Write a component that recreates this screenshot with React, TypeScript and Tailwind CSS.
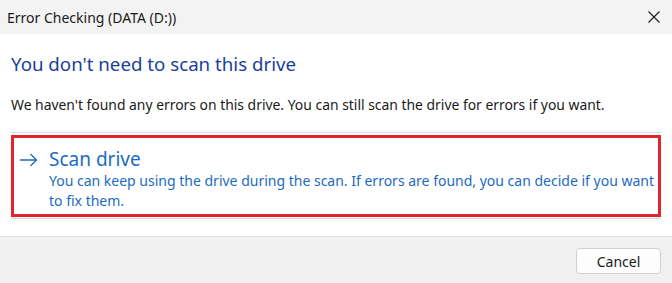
import React from "react";

const font = { fontFamily: '"Segoe UI", "Noto Sans", sans-serif' };

const CloseIcon = () => (
  <svg width="12" height="12" viewBox="0 0 12 12" fill="none">
    <path d="M0.5 0.5L11.5 11.5M11.5 0.5L0.5 11.5" stroke="#1a1a1a" strokeWidth="1.1" />
  </svg>
);

const ArrowIcon = () => (
  <svg width="18" height="14" viewBox="0 0 18 14" fill="none">
    <path d="M0 7H16.5M10.5 1L16.5 7L10.5 13" stroke="#1c6bc0" strokeWidth="1.3" />
  </svg>
);

export default function App() {
  return (
    <div
      className="w-[672px] h-[283px] bg-white flex flex-col overflow-hidden"
      style={font}
    >
      <div className="h-[34px] bg-[#f3f3f3] flex items-center justify-between pl-[7px] pr-[12px]">
        <span className="text-[14px] text-[#1a1a1a]">Error Checking (DATA (D:))</span>
        <CloseIcon />
      </div>

      <div className="px-[11px]">
        <h1 className="mt-[17px] text-[18.7px] leading-[26px] text-[#1b3f99]">
          You don't need to scan this drive
        </h1>
        <p className="mt-[19px] text-[13.9px] leading-[18px] text-[#1a1a1a]">
          We haven't found any errors on this drive. You can still scan the drive for errors if you want.
        </p>

        <div className="mt-[18px] border-y border-[#d3dbe9] pt-[2px] pb-[1px]">
          <div className="border-[3px] border-[#e0262b] flex pl-[6px] pt-[9px] pb-[3px]">
            <div className="w-[29px] shrink-0 pt-[6px]">
              <ArrowIcon />
            </div>
            <div className="min-w-0">
              <div className="text-[19px] leading-[24px] text-[#1c6bc0]">Scan drive</div>
              <div className="text-[14px] leading-[20px] text-[#1c6bc0]">
                <div className="whitespace-nowrap">
                  You can keep using the drive during the scan. If errors are found, you can decide if you want
                </div>
                <div>to fix them.</div>
              </div>
            </div>
          </div>
        </div>
      </div>

      <div className="mt-auto h-[47px] border-t border-[#e3e3e3] bg-[#f0f0f0] flex items-start justify-end pt-[11px] pr-[11px]">
        <button className="w-[85px] h-[26px] bg-[#fdfdfd] border border-[#d0d0d0] rounded-[4px] text-[14px] text-[#1a1a1a]">
          Cancel
        </button>
      </div>
    </div>
  );
}
